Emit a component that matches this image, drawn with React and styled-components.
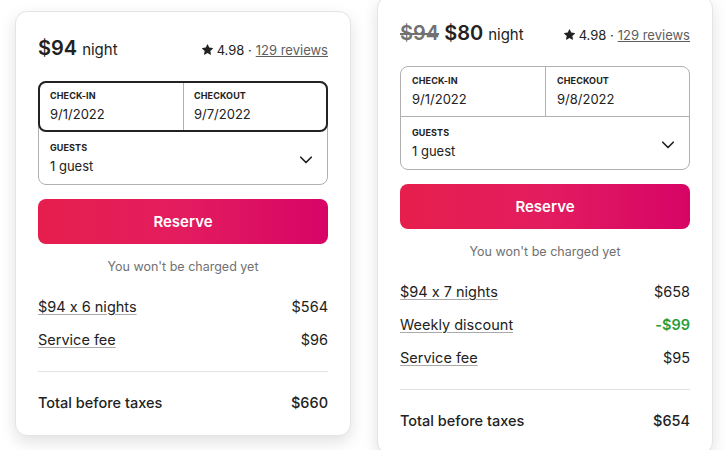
import React from 'react';
import styled, { createGlobalStyle } from 'styled-components';

const GlobalStyle = createGlobalStyle`
    html, body {
        margin: 0;
        padding: 0;
        background: #fff;
        overflow: hidden;
    }
    body {
        font-family: Inter, "Noto Sans", sans-serif;
        font-feature-settings: "calt" 0;
        color: #222;
        -webkit-font-smoothing: antialiased;
    }
`

const Page = styled.div`
    display: flex;
    align-items: flex-start;
    gap: 26px;
    padding-left: 15px;
    height: 450px;
    overflow: hidden;
`

const Card = styled.div`
    width: 336px;
    box-sizing: border-box;
    margin-top: ${p => p.$top}px;
    padding: 24px 22px 22px;
    background: #fff;
    border: 1px solid #e4e4e4;
    border-radius: 12px;
    box-shadow: 0 6px 16px rgba(0, 0, 0, 0.12);
    flex-shrink: 0;
`

const Header = styled.div`
    display: flex;
    justify-content: space-between;
    align-items: baseline;
    height: 26px;
    margin-bottom: 19px;
`

const Price = styled.div`
    display: flex;
    align-items: baseline;
    gap: 5px;
`

const Amount = styled.span`
    font-size: 20px;
    font-weight: 600;
    color: ${p => (p.$old ? '#717171' : '#222')};
    text-decoration: ${p => (p.$old ? 'line-through' : 'none')};
`

const Unit = styled.span`
    font-size: 15px;
    color: #222;
`

const Rating = styled.div`
    display: flex;
    align-items: center;
    gap: 4px;
    font-size: 13px;
    color: #222;
`

const Reviews = styled.span`
    color: #5e5e5e;
    text-decoration: underline;
`

const Picker = styled.div`
    border: 1px solid #b0b0b0;
    border-radius: 8px;
`

const DateRow = styled.div`
    display: grid;
    grid-template-columns: 1fr 1fr;
    border-bottom: 1px solid #b0b0b0;
    border-radius: 8px 8px 0 0;
    ${p => p.$active && `
        margin: -1px -1px 0;
        border: 2px solid #222;
        border-radius: 8px;
    `}
`

const Cell = styled.div`
    padding: ${p => (p.$active ? '7px 10px' : '8px 11px 8px')};
    border-left: ${p => (p.$divider ? '1px solid #b0b0b0' : 'none')};
    display: flex;
    align-items: center;
    justify-content: space-between;
`

const Label = styled.div`
    font-size: 9px;
    font-weight: 700;
    letter-spacing: 0.1px;
    line-height: 12px;
    text-transform: uppercase;
    color: #222;
`

const Value = styled.div`
    font-size: 13px;
    line-height: 18px;
    margin-top: 3px;
    color: #222;
`

const GuestCell = styled(Cell)`
    padding: 10px 14px 9px 11px;
`

const ReserveButton = styled.button`
    display: block;
    width: 100%;
    height: 45px;
    margin-top: 14px;
    border: none;
    border-radius: 8px;
    background: linear-gradient(to right, #e61e4d 0%, #e31c5f 50%, #d70466 100%);
    color: #fff;
    font-family: inherit;
    font-size: 15px;
    font-weight: 600;
    cursor: pointer;
`

const Note = styled.div`
    margin-top: 14px;
    text-align: center;
    font-size: 12.5px;
    line-height: 18px;
    color: #717171;
`

const Lines = styled.div`
    display: flex;
    flex-direction: column;
    gap: 13px;
    margin-top: 21px;
`

const Line = styled.div`
    display: flex;
    justify-content: space-between;
    font-size: 14.5px;
    line-height: 20px;
    font-weight: ${p => (p.$bold ? 500 : 400)};
    color: #222;
`

const LineLabel = styled.span`
    text-decoration: ${p => (p.$link ? 'underline' : 'none')};
    text-decoration-color: #aaa;
    text-underline-offset: 2px;
`

const LineValue = styled.span`
    color: ${p => (p.$green ? '#2a9d3a' : '#222')};
    font-weight: ${p => (p.$green ? 600 : 'inherit')};
`

const Divider = styled.hr`
    border: none;
    border-top: 1px solid #e2e2e2;
    margin: 21px 0 21px;
`

const Star = () => (
    <svg width="11" height="11" viewBox="0 0 32 32" fill="#222">
        <path d="M15.1 1.58l-4.13 8.88-9.86 1.27a1 1 0 0 0-.54 1.74l7.3 6.57-1.970 9.85a1 1 0 0 0 1.480 1.06l8.62-5 8.63 5a1 1 0 0 0 1.48-1.06l-1.97-9.85 7.3-6.57a1 1 0 0 0-.55-1.73l-9.86-1.28-4.12-8.88a1 1 0 0 0-1.82 0z" />
    </svg>
)

const Chevron = () => (
    <svg width="14" height="14" viewBox="0 0 32 32" fill="none" stroke="#222" strokeWidth="4" strokeLinecap="round" strokeLinejoin="round">
        <path d="M28 12L16 24 4 12" />
    </svg>
)

const cards = [
    {
        top: 11,
        active: true,
        price: '$94',
        checkout: '9/7/2022',
        lines: [
            { label: '$94 x 6 nights', value: '$564' },
            { label: 'Service fee', value: '$96' },
        ],
        total: '$660',
    },
    {
        top: -4,
        oldPrice: '$94',
        price: '$80',
        checkout: '9/8/2022',
        lines: [
            { label: '$94 x 7 nights', value: '$658' },
            { label: 'Weekly discount', value: '-$99', green: true },
            { label: 'Service fee', value: '$95' },
        ],
        total: '$654',
    },
]

const BookingCard = ({ card }) => (
    <Card $top={card.top}>
        <Header>
            <Price>
                {card.oldPrice && <Amount $old>{card.oldPrice}</Amount>}
                <Amount>{card.price}</Amount>
                <Unit>night</Unit>
            </Price>
            <Rating>
                <Star />
                <span>4.98 ·</span>
                <Reviews>129 reviews</Reviews>
            </Rating>
        </Header>

        <Picker>
            <DateRow $active={card.active}>
                <Cell $active={card.active}>
                    <div>
                        <Label>Check-in</Label>
                        <Value>9/1/2022</Value>
                    </div>
                </Cell>
                <Cell $active={card.active} $divider>
                    <div>
                        <Label>Checkout</Label>
                        <Value>{card.checkout}</Value>
                    </div>
                </Cell>
            </DateRow>
            <GuestCell>
                <div>
                    <Label>Guests</Label>
                    <Value>1 guest</Value>
                </div>
                <Chevron />
            </GuestCell>
        </Picker>

        <ReserveButton>Reserve</ReserveButton>
        <Note>You won't be charged yet</Note>

        <Lines>
            {card.lines.map(line => (
                <Line key={line.label}>
                    <LineLabel $link>{line.label}</LineLabel>
                    <LineValue $green={line.green}>{line.value}</LineValue>
                </Line>
            ))}
        </Lines>

        <Divider />

        <Line $bold>
            <LineLabel>Total before taxes</LineLabel>
            <LineValue>{card.total}</LineValue>
        </Line>
    </Card>
)

const App = function() {
    return (
        <>
            <GlobalStyle />
            <Page>
                {cards.map((card, i) => (
                    <BookingCard key={i} card={card} />
                ))}
            </Page>
        </>
    )
}

export default App;
